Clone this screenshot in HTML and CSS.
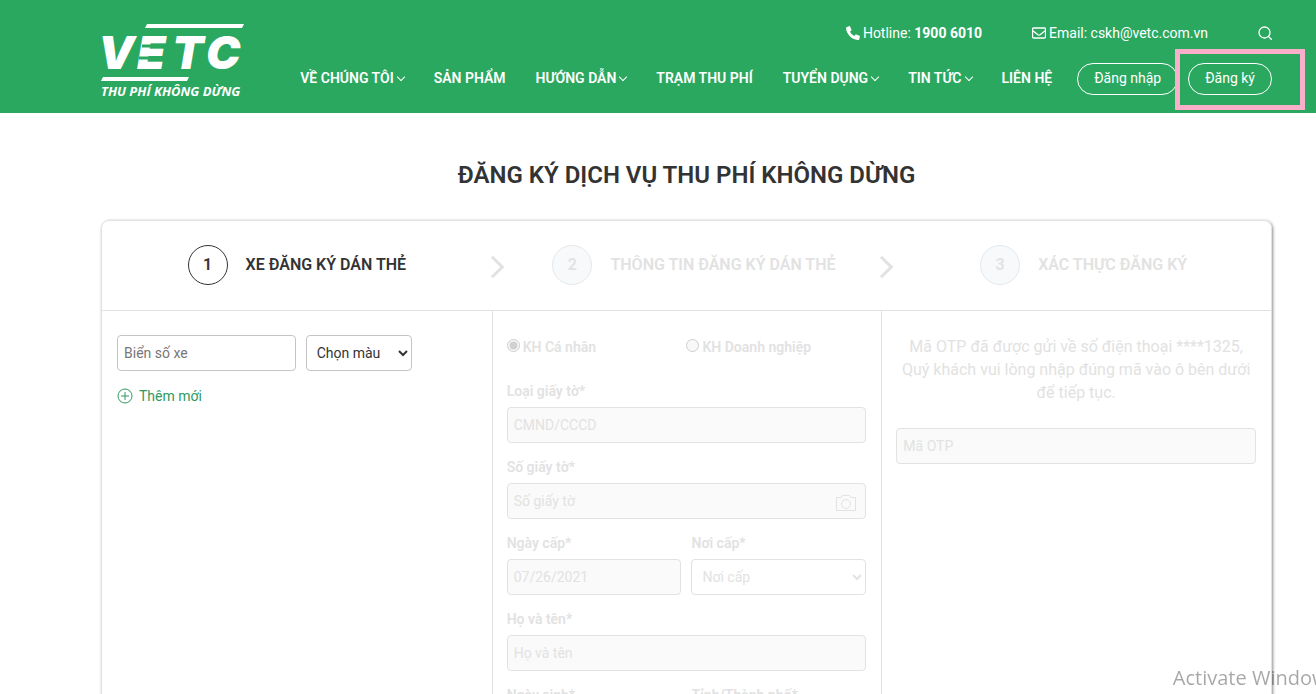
FILE: index.html
```html
<!DOCTYPE html>
<html lang="vi">

<head>
  <meta charset="utf-8">
  <title>VETC - Đăng ký dịch vụ thu phí không dừng</title>
  <meta name="viewport" content="width=device-width, initial-scale=1">
  <link rel="stylesheet" href="styles.css">
</head>

<body>
  <header class="header">
    <a class="logo" href="#" aria-label="VETC">
      <svg width="144" height="78" viewBox="0 0 144 78">
        <path class="fill" d="M46 4h97l-2 4H44z" />
        <text class="logo-name" y="49" x="-3 36 71 105">VETC</text>
        <path class="cut" d="M41 26h30M38 38h30" />
        <path class="fill" d="M2 57h86l-2 4H0z" />
        <text class="logo-tag" x="0" y="76">THU PHÍ KHÔNG DỪNG</text>
      </svg>
    </a>
    <div class="header-main">
      <div class="contact">
        <a href="#">
          <svg class="icon" width="14" height="14" viewBox="0 0 14 14"><path class="fill" d="M.6 1.200L3.400.1q.5-.1.700.3L5.500 3.700q.2.500-.2.800L4 5.700Q5.300 8.700 8.300 10l1.200-1.400q.3-.4.800-.2l3.200 1.400q.5.300.4.800l-.7 2.800q-.2.600-.8.600Q7.500 14 3.800 10.200T0 1.800q0-.4.600-.6z" /></svg>
          <span>Hotline: <b>1900 6010</b></span>
        </a>
        <a href="#">
          <svg class="icon" width="14" height="14" viewBox="0 0 14 14"><path class="line" d="M1.500 2h11q1 0 1 1v8q0 1-1 1h-11q-1 0-1-1V3q0-1 1-1zM.5 4.500L6 8.800q1 .7 2 0l5.500-4.300" /></svg>
          <span>Email: cskh@vetc.com.vn</span>
        </a>
        <a class="search" href="#" aria-label="Tìm kiếm">
          <svg class="icon" width="14" height="14" viewBox="0 0 14 14"><circle class="line" cx="6.500" cy="6.500" r="5.500" /><path class="line" d="M10.500 10.500l3.200 3.200" /></svg>
        </a>
      </div>
      <div class="nav-row">
        <nav class="nav">
          <a class="has-sub" href="#">VỀ CHÚNG TÔI</a>
          <a href="#">SẢN PHẨM</a>
          <a class="has-sub" href="#">HƯỚNG DẪN</a>
          <a href="#">TRẠM THU PHÍ</a>
          <a class="has-sub" href="#">TUYỂN DỤNG</a>
          <a class="has-sub" href="#">TIN TỨC</a>
          <a href="#">LIÊN HỆ</a>
        </nav>
        <button type="button" class="pill">Đăng nhập</button>
        <div class="highlight">
          <button type="button" class="pill">Đăng ký</button>
        </div>
      </div>
    </div>
  </header>

  <main class="main">
    <h1>ĐĂNG KÝ DỊCH VỤ THU PHÍ KHÔNG DỪNG</h1>
    <div class="card">
      <section>
        <h2 class="step active"><span class="num">1</span>XE ĐĂNG KÝ DÁN THẺ</h2>
        <div class="panel">
          <div class="vehicle">
            <input type="text" class="field" placeholder="Biển số xe" aria-label="Biển số xe">
            <select class="field" aria-label="Chọn màu">
              <option>Chọn màu</option>
            </select>
          </div>
          <a class="add" href="#">
            <svg width="16" height="16" viewBox="0 0 16 16"><circle cx="8" cy="8" r="7" /><path d="M8 4v8M4 8h8" /></svg>
            Thêm mới
          </a>
        </div>
      </section>

      <section>
        <h2 class="step"><span class="num">2</span>THÔNG TIN ĐĂNG KÝ DÁN THẺ</h2>
        <div class="panel">
          <div class="radios">
            <label><input type="radio" name="type" checked disabled>KH Cá nhân</label>
            <label><input type="radio" name="type" disabled>KH Doanh nghiệp</label>
          </div>
          <div class="group">
            <label for="doc-type">Loại giấy tờ*</label>
            <input type="text" class="field" id="doc-type" placeholder="CMND/CCCD" disabled>
          </div>
          <div class="group">
            <label for="doc-no">Số giấy tờ*</label>
            <div class="with-icon">
              <input type="text" class="field" id="doc-no" placeholder="Số giấy tờ" disabled>
              <svg class="camera" width="20" height="16" viewBox="0 0 20 16"><path d="M.5 2.500H5l1.500-2h7l1.500 2h4.500v13H.5z" /><circle cx="10" cy="9" r="4.500" /></svg>
            </div>
          </div>
          <div class="pair">
            <div class="group">
              <label for="issued">Ngày cấp*</label>
              <input type="text" class="field" id="issued" placeholder="07/26/2021" disabled>
            </div>
            <div class="group">
              <label for="place">Nơi cấp*</label>
              <select class="field" id="place" disabled>
                <option>Nơi cấp</option>
              </select>
            </div>
          </div>
          <div class="group">
            <label for="name">Họ và tên*</label>
            <input type="text" class="field" id="name" placeholder="Họ và tên" disabled>
          </div>
          <div class="pair">
            <div class="group">
              <label for="birth">Ngày sinh*</label>
              <input type="text" class="field" id="birth" disabled>
            </div>
            <div class="group">
              <label for="city">Tỉnh/Thành phố*</label>
              <select class="field" id="city" disabled></select>
            </div>
          </div>
        </div>
      </section>

      <section>
        <h2 class="step"><span class="num">3</span>XÁC THỰC ĐĂNG KÝ</h2>
        <div class="panel">
          <p class="otp-note">Mã OTP đã được gửi về số điện thoại ****1325, Quý khách vui lòng nhập đúng mã vào ô bên dưới để tiếp tục.</p>
          <input type="text" class="field" placeholder="Mã OTP" aria-label="Mã OTP" disabled>
        </div>
      </section>
    </div>
  </main>

  <div class="watermark">Activate Windows</div>
</body>

</html>
```

FILE: styles.css
```css
* { box-sizing: border-box; margin: 0; padding: 0; }
body {
  font: 14px/20px Roboto, "Liberation Sans", sans-serif;
  color: #333;
  background: #fff;
  overflow-x: hidden;
}
a { color: inherit; text-decoration: none; }
button, input, select { font: inherit; color: inherit; }

/* header */
.header {
  display: flex;
  justify-content: space-between;
  padding: 20px 44px 15px 101px;
  color: #fff;
  background: #2aa85f;
}
.logo svg {
  display: block;
  overflow: visible;
}
.fill { fill: #fff; }
.line { fill: none; stroke: #fff; stroke-width: 1.3; }
.cut { stroke: #2aa85f; stroke-width: 3; }
.logo-name {
  font: italic 900 46px Inter, sans-serif;
  fill: #fff;
}
.logo-tag {
  font: italic 700 13px "Open Sans", sans-serif;
  fill: #fff;
}
.contact {
  display: flex;
  justify-content: flex-end;
  gap: 50px;
  padding: 3px 0 20px;
}
.contact a {
  display: flex;
  align-items: center;
  gap: 3px;
}
.contact b { font-weight: 700; }
.nav-row {
  display: flex;
  align-items: center;
}
.nav {
  display: flex;
  gap: 30px;
  margin-right: 25px;
  padding-bottom: 2px;
  font-weight: 600;
  white-space: nowrap;
}
.has-sub::after {
  content: "";
  display: inline-block;
  width: 5px;
  height: 5px;
  margin: 0 1px 3px 4px;
  border: solid #fff;
  border-width: 0 1px 1px 0;
  transform: rotate(45deg);
}
.nav .has-sub { margin-right: -1px; }
.pill {
  height: 32px;
  padding: 0 16px 2px;
  border: 1px solid #fff;
  border-radius: 16px;
  background: none;
  white-space: nowrap;
}
.highlight {
  position: relative;
  margin-left: 10px;
}
.highlight::after {
  content: "";
  position: absolute;
  top: -14px;
  right: -33px;
  bottom: -15px;
  left: -13px;
  border: 5px solid #f9afc9;
  pointer-events: none;
}

/* registration card */
.main { padding: 46px 44px 40px 101px; }
h1 {
  margin-bottom: 29px;
  font-size: 24px;
  line-height: 32px;
  font-weight: 600;
  text-align: center;
}
.card {
  display: grid;
  grid-template-columns: repeat(3, 1fr);
  border: 1px solid #e2e2e2;
  border-radius: 8px;
  box-shadow: 1px 1px 3px rgba(0, 0, 0, .45);
}
.card section {
  display: flex;
  flex-direction: column;
}
.step {
  position: relative;
  display: flex;
  align-items: center;
  justify-content: center;
  gap: 18px;
  height: 90px;
  padding: 0 0 1px 15px;
  border-bottom: 1px solid #e2e2e2;
  color: #e2e2e2;
  font-size: 16px;
  font-weight: 600;
}
section:not(:last-child) .step::after {
  content: "";
  position: absolute;
  top: 38px;
  right: -9px;
  width: 13px;
  height: 13px;
  border: solid #e2e2e2;
  border-width: 3px 3px 0 0;
  transform: rotate(45deg);
}
.num {
  display: flex;
  align-items: center;
  justify-content: center;
  width: 40px;
  height: 40px;
  border: 1px solid #e4e8ec;
  border-radius: 50%;
  background: #f8f9fa;
}
.active {
  padding-left: 0;
  color: #333;
}
.active .num {
  border-color: #333;
  background: #fff;
}
.panel {
  flex: 1;
  padding: 24px 15px;
}
section + section .panel {
  padding-left: 14px;
  border-left: 1px solid #e2e2e2;
  color: #e2e2e2;
}
.field {
  display: block;
  width: 100%;
  height: 36px;
  padding: 0 6px;
  border: 1px solid #c4c4c4;
  border-radius: 4px;
  background: #fff;
}
.field::placeholder { color: #777; }
select.field { color: #333; }
.field:disabled {
  border-color: #e2e2e2;
  background: #fafafa;
}
.field:disabled::placeholder { color: #e2e2e2; }
select.field:disabled {
  background: #fff;
  color: #e2e2e2;
  opacity: 1;
}
.vehicle {
  display: grid;
  grid-template-columns: 1fr 106px;
  gap: 10px;
  margin-right: 65px;
}
.add {
  display: inline-flex;
  align-items: center;
  gap: 6px;
  margin-top: 15px;
  color: #2e9a60;
}
.add svg {
  fill: none;
  stroke: #2e9a60;
}
.radios {
  display: grid;
  grid-template-columns: 1fr 1fr;
  height: 46px;
  font-weight: 600;
}
.radios label {
  display: flex;
  align-items: center;
  height: 24px;
}
.radios input {
  margin: 0 3px 3px 0;
}
.group { margin-bottom: 14px; }
.group label {
  display: block;
  margin-bottom: 6px;
  font-weight: 600;
}
.pair {
  display: grid;
  grid-template-columns: 1fr 1fr;
  gap: 10px;
}
.with-icon { position: relative; }
.camera {
  position: absolute;
  right: 10px;
  bottom: 8px;
  fill: none;
  stroke: #e2e2e2;
}
.otp-note {
  margin-bottom: 24px;
  font-size: 16px;
  line-height: 23px;
  text-align: center;
}
.watermark {
  position: fixed;
  right: -21px;
  bottom: 2px;
  font: 20px/28px "Open Sans", sans-serif;
  color: rgba(0, 0, 0, .35);
  white-space: nowrap;
}
```
